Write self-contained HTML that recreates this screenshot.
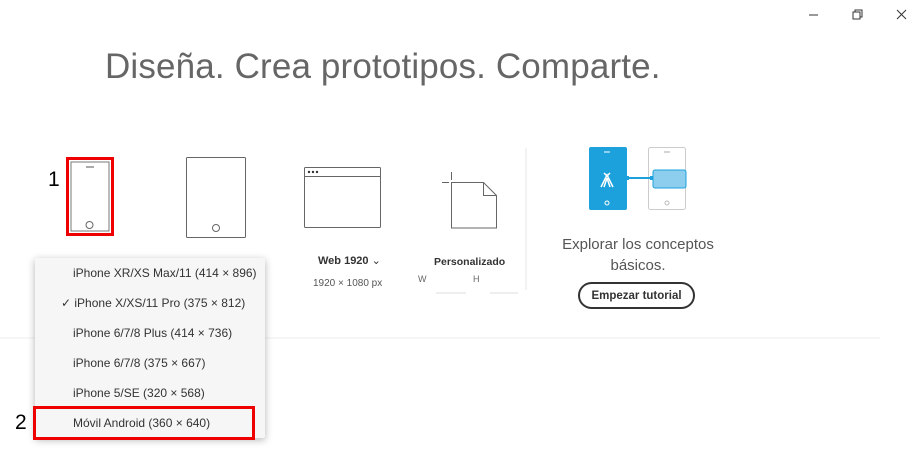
<!DOCTYPE html>
<html><head><meta charset="utf-8"><style>
body{margin:0;width:922px;height:453px;background:#fff;overflow:hidden;position:relative;font-family:"Liberation Sans",sans-serif;color:#444}
.a{position:absolute}
.title{left:105px;top:47px;font-size:35px;color:#666;white-space:nowrap;letter-spacing:0.15px}
.dd{left:35px;top:258px;width:230px;height:180px;background:#f6f6f6;box-shadow:0 2px 8px rgba(0,0,0,.3);border-radius:2px}
.it{position:absolute;left:38px;font-size:12px;color:#333;white-space:nowrap}
</style></head><body>
<svg class="a" style="left:0;top:0" width="922" height="453">
<line x1="809" y1="15" x2="818" y2="15" stroke="#333" stroke-width="1"/>
<rect x="853" y="12" width="7" height="7" fill="none" stroke="#333"/>
<path d="M855 12V10h7v7h-2" fill="none" stroke="#333"/>
<path d="M897 10l9 9M906 10l-9 9" stroke="#333"/>
<line x1="0" y1="338" x2="880" y2="338" stroke="#eee"/>
<line x1="526" y1="148" x2="526" y2="290" stroke="#e6e6e6"/>
<rect x="67.5" y="158.5" width="45" height="76" fill="none" stroke="#e00" stroke-width="3"/>
<rect x="71" y="162" width="38" height="69" fill="none" stroke="#777"/>
<line x1="86" y1="167" x2="94" y2="167" stroke="#555"/>
<circle cx="89.5" cy="225" r="3.5" fill="none" stroke="#666"/>
<rect x="186.5" y="157.5" width="59" height="80" rx="1" fill="none" stroke="#666"/>
<circle cx="216" cy="228" r="3.5" fill="none" stroke="#666"/>
<rect x="304.5" y="167.5" width="76" height="60" rx="1" fill="none" stroke="#666"/>
<line x1="305" y1="176.5" x2="380" y2="176.5" stroke="#666"/>
<circle cx="309" cy="172" r="1.2" fill="#333"/><circle cx="313" cy="172" r="1.2" fill="#333"/><circle cx="317" cy="172" r="1.2" fill="#333"/>
<path d="M451.5 182.5h32l13 13v32.5h-45z M483.5 182.5v13h13" fill="none" stroke="#666"/>
<path d="M442 182.5h7M451.5 172v8" stroke="#666"/>
<line x1="436" y1="293" x2="466" y2="293" stroke="#ddd"/>
<line x1="490" y1="293" x2="518" y2="293" stroke="#ddd"/>
<rect x="589" y="147" width="38" height="63" rx="2" fill="#1da1dc"/>
<line x1="604" y1="152" x2="610" y2="152" stroke="#fff"/>
<circle cx="607" cy="203" r="2" fill="none" stroke="#fff"/>
<path d="M601 187l6-12 6 12M607 178l-3 9M607 178l3 9M604 173l3 3 3-3" fill="none" stroke="#fff" stroke-width="1.5"/>
<rect x="648.5" y="147.5" width="37" height="62" rx="2" fill="#fff" stroke="#ccc"/>
<line x1="664" y1="152" x2="670" y2="152" stroke="#aaa"/>
<circle cx="667" cy="203" r="2" fill="none" stroke="#bbb"/>
<line x1="627" y1="178" x2="653" y2="178" stroke="#1da1dc" stroke-width="2"/>
<rect x="626" y="176" width="3" height="4" fill="#1da1dc"/><rect x="650" y="176" width="3" height="4" fill="#1da1dc"/>
<rect x="653" y="170" width="33" height="18" rx="2" fill="#8dcdee" stroke="#1da1dc"/>
</svg>
<div class="a title">Diseña. Crea prototipos. Comparte.</div>
<div class="a" style="left:48px;top:168px;font-size:21px;color:#000">1</div>
<div class="a" style="left:15px;top:411px;font-size:21px;color:#000">2</div>
<div class="a" style="left:318px;top:254px;font-size:11px;font-weight:bold;color:#333">Web 1920 <span style="font-weight:normal">&#8964;</span></div>
<div class="a" style="left:313px;top:278px;font-size:10px;color:#555">1920 × 1080 px</div>
<div class="a" style="left:434px;top:256px;font-size:10.5px;font-weight:bold;color:#333">Personalizado</div>
<div class="a" style="left:418px;top:274px;font-size:9px;color:#666">W</div>
<div class="a" style="left:473px;top:274px;font-size:9px;color:#666">H</div>
<div class="a" style="left:540px;top:234px;width:196px;text-align:center;font-size:15px;color:#555;line-height:21px">Explorar los conceptos<br>básicos.</div>
<div class="a" style="left:578px;top:282px;width:113px;height:23px;border:2px solid #333;border-radius:14px;text-align:center;font-size:11.5px;font-weight:bold;line-height:24px;color:#333">Empezar tutorial</div>
<div class="a dd">
<div class="it" style="top:8px">iPhone XR/XS Max/11 (414 × 896)</div>
<div class="it" style="top:38px;left:26px">✓ iPhone X/XS/11 Pro (375 × 812)</div>
<div class="it" style="top:68px">iPhone 6/7/8 Plus (414 × 736)</div>
<div class="it" style="top:98px">iPhone 6/7/8 (375 × 667)</div>
<div class="it" style="top:128px">iPhone 5/SE (320 × 568)</div>
<div class="it" style="top:158px">Móvil Android (360 × 640)</div>
</div>
<div class="a" style="left:33px;top:406px;width:216px;height:28px;border:3px solid #e00"></div>
</body></html>
